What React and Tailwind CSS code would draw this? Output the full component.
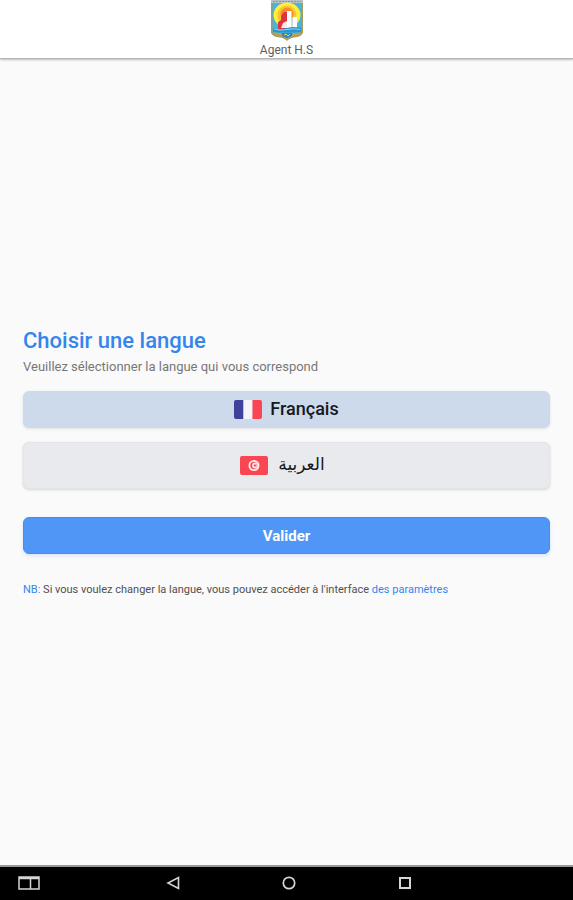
import { useState } from "react";

function Crest() {
  return (
    <svg viewBox="0 0 32 41" className="h-[41px] w-8" role="img" aria-label="Agent H.S">
      <path d="M0 0H32V33Q30 37 23 37.5Q18 38.500 16 41Q14 38.500 9 37.500Q2 37 0 33Z" fill="#a99b58" />
      <path d="M0 0H32V3H0Z" fill="#b9c2c8" />
      <path d="M2 1.500H30" stroke="#8494a0" strokeDasharray="2 1" />
      <path d="M1.500 3.500H30.500V33H1.500Z" fill="#45b5e0" />
      <ellipse cx="16" cy="15" rx="13.500" ry="12.500" fill="#ffee3c" />
      <circle cx="16" cy="15" r="9.500" fill="#fdc52c" />
      <circle cx="16" cy="14" r="6.500" fill="#f68a2e" />
      <path d="M7 29V22L10 20V16L13 12H16V29Z" fill="#df3440" />
      <path d="M16 11H20.500V28H16ZM22 17H26V28H22Z" fill="#fff" />
      <path d="M12 23L16 21V28H10Z" fill="#f5e9e6" />
      <path d="M20.500 18H22V28H20.500Z" fill="#c9dbe4" />
      <path d="M2 28Q9 30 16 28T30 28V32.500H2Z" fill="#2b95cf" />
      <path d="M3 29Q9 31 16 29.500T29 29.500" fill="none" stroke="#8fd4ec" />
      <path d="M2 32Q16 35 30 32L28 35Q21 36 16 39Q10 36 4 35Z" fill="#b5a15b" />
      <path d="M11 33H21V36L16 38 11 36Z" fill="#2a83c4" />
      <path d="M13 35L15 34 17 36 19 34" fill="none" stroke="#d9dc82" />
    </svg>
  );
}

function FrenchFlag() {
  return (
    <svg viewBox="0 0 28 19" className="h-[19px] w-7" aria-hidden="true">
      <path d="M2 0H9.500V19H2Q0 19 0 17V2Q0 0 2 0Z" fill="#3e429b" />
      <path d="M9.500 0H18.500V19H9.500Z" fill="#f5f5f7" />
      <path d="M18.500 0H26Q28 0 28 2V17Q28 19 26 19H18.500Z" fill="#fa4653" />
    </svg>
  );
}

function TunisianFlag() {
  return (
    <svg viewBox="0 0 28 19" className="h-[19px] w-7" aria-hidden="true">
      <rect width="28" height="19" rx="2" fill="#fa4653" />
      <circle cx="14" cy="9.500" r="5.500" fill="#f7eeee" />
      <circle cx="14" cy="9.500" r="3.700" fill="#fa4653" />
      <circle cx="15" cy="9.500" r="2.900" fill="#f7eeee" />
      <path d="M13 9.500L14.500 9V7.500L15.500 8.700 17 8.200 16.200 9.500 17 10.800 15.500 10.300 14.500 11.500V10Z" fill="#fa4653" />
    </svg>
  );
}

export default function App() {
  const [language, setLanguage] = useState("fr");

  return (
    <div className="flex min-h-screen flex-col bg-[#fafafa] font-['Roboto','DejaVu_Sans',sans-serif]">
      <header className="flex flex-col items-center border-b border-[#b5b5b5] bg-white shadow-[0_1px_2px_#00000040]">
        <Crest />
        <p className="pt-px text-xs leading-4 text-[#606060]">Agent H.S</p>
      </header>

      <main className="flex flex-1 flex-col justify-center px-[23px]">
        <h1 className="text-[22px] leading-7 font-medium text-[#3486ed]">Choisir une langue</h1>
        <p className="pt-0.5 text-[13px] leading-5 text-[#777]">Veuillez sélectionner la langue qui vous correspond</p>

        <div className="mt-3.5 flex flex-col gap-3.5">
          <button
            type="button"
            aria-pressed={language === "fr"}
            onClick={() => setLanguage("fr")}
            className="flex h-[37px] items-center justify-center gap-2 rounded-md bg-[#cddaeb] text-lg font-medium text-[#15191e] shadow-[0_1px_3px_#0000001a]"
          >
            <FrenchFlag />
            <span>Français</span>
          </button>
          <button
            type="button"
            aria-pressed={language === "ar"}
            onClick={() => setLanguage("ar")}
            className="flex h-[47px] items-center justify-center gap-2.5 rounded-md border border-[#e3e5e8] bg-[#e8eaed] pr-2 text-[17px] text-[#15191e] shadow-[0_1px_3px_#00000026]"
          >
            <TunisianFlag />
            <span lang="ar" dir="rtl">العربية</span>
          </button>
        </div>

        <button
          type="button"
          className="mt-7 h-[37px] rounded-md border border-[#428ef6] bg-[#4f96f6] pt-0.5 text-[15px] font-bold text-white shadow-[0_2px_4px_#4f96f633]"
        >
          Valider
        </button>

        <p className="mt-7 text-[11px] leading-4 text-[#505050]">
          <span className="text-[#3486ed]">NB:</span> Si vous voulez changer la langue, vous pouvez accéder à l'interface{" "}
          <a href="#parametres" className="text-[#3486ed]">des paramètres</a>
        </p>
      </main>

      <nav aria-label="Navigation" className="grid h-[35px] grid-cols-[1fr_auto_1fr] items-center border-t-2 border-[#969696] bg-black pr-3.5 pb-px pl-[18px] text-[#d5d5d5]">
        <button type="button" aria-label="Fenêtres" className="w-[22px]">
          <svg viewBox="0 0 22 14" className="h-3.5 w-[22px]" fill="none" stroke="currentColor" strokeWidth="1.500">
            <path d="M1 1H21V13H1ZM12.500 2V13M1 2.500H21" />
          </svg>
        </button>
        <div className="flex gap-[102px]">
          <button type="button" aria-label="Retour">
            <svg viewBox="0 0 14 14" className="size-3.5" fill="none" stroke="currentColor" strokeWidth="1.600">
              <path d="M12.500 1.500V12.500L2 7Z" />
            </svg>
          </button>
          <button type="button" aria-label="Accueil">
            <svg viewBox="0 0 14 14" className="size-3.5" fill="none" stroke="currentColor" strokeWidth="1.700">
              <circle cx="7" cy="7" r="5.700" />
            </svg>
          </button>
          <button type="button" aria-label="Applications récentes">
            <svg viewBox="0 0 14 14" className="size-3.5" fill="none" stroke="currentColor" strokeWidth="2">
              <path d="M2 2H12V12H2Z" />
            </svg>
          </button>
        </div>
      </nav>
    </div>
  );
}
